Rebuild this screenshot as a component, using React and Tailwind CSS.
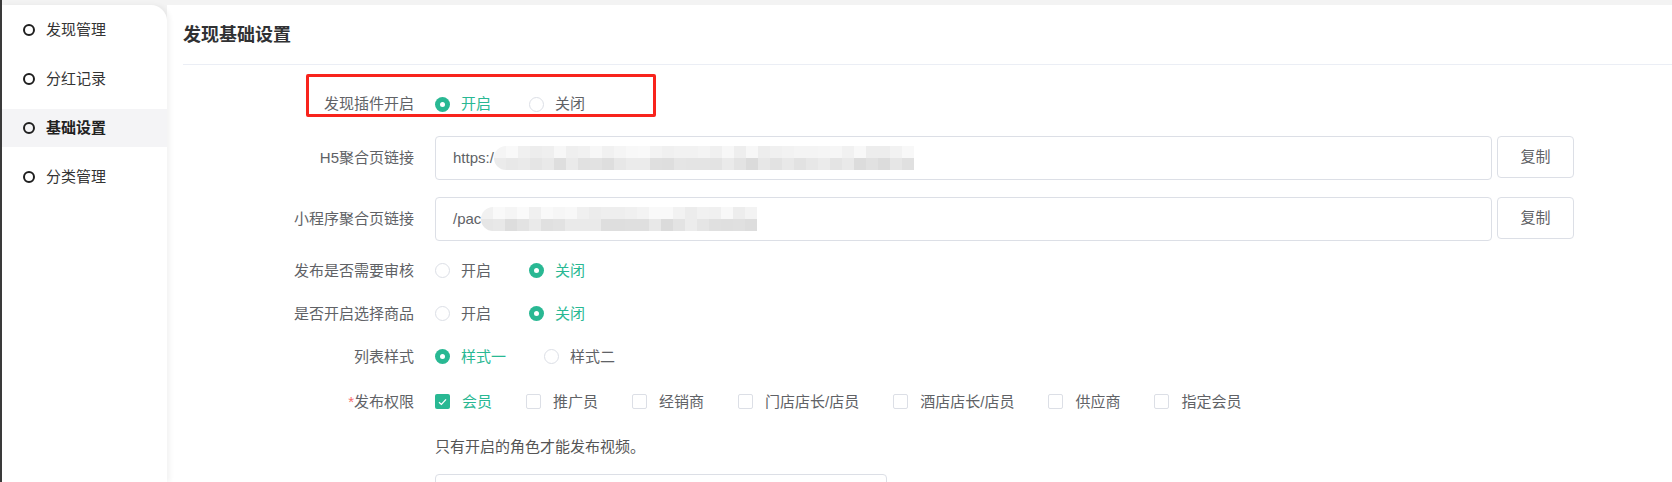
import React from "react";

function shades(n, seed, base, range) {
  const out = [];
  let s = seed;
  for (let i = 0; i < n; i++) {
    s = (s * 9301 + 49297) % 233280;
    const v = Math.round(base + (s / 233280) * range);
    out.push(`rgb(${v},${v},${v})`);
  }
  return out;
}

function Mosaic({ cols, seed }) {
  const top = shades(cols, seed, 236, 14);
  const bottom = shades(cols, seed + 7, 218, 18);
  return (
    <div className="flex flex-col overflow-hidden rounded-l-full blur-[0.4px]">
      <div className="flex">
        {top.map((c, i) => (
          <div key={i} className="h-[12px] w-[12px]" style={{ backgroundColor: c }} />
        ))}
      </div>
      <div className="flex">
        {bottom.map((c, i) => (
          <div key={i} className="h-[12px] w-[12px]" style={{ backgroundColor: c }} />
        ))}
      </div>
    </div>
  );
}

function Radio({ checked, label }) {
  return (
    <div className="mr-[38px] flex items-center">
      {checked ? (
        <span className="flex h-[15px] w-[15px] items-center justify-center rounded-full bg-[#29b893]">
          <span className="h-[5px] w-[5px] rounded-full bg-white" />
        </span>
      ) : (
        <span className="h-[15px] w-[15px] rounded-full border border-[#dcdfe6] bg-white" />
      )}
      <span
        className={
          checked
            ? "ml-[11px] text-[15px] leading-[20px] text-[#29b893]"
            : "ml-[11px] text-[15px] leading-[20px] text-[#606266]"
        }
      >
        {label}
      </span>
    </div>
  );
}

function Checkbox({ checked, label }) {
  return (
    <div className="mr-[34px] flex items-center">
      {checked ? (
        <span className="flex h-[15px] w-[15px] items-center justify-center rounded-[2px] bg-[#29b893]">
          <svg width="9" height="8" viewBox="0 0 9 8" fill="none">
            <path d="M1 4.2 L3.4 6.4 L8 1.4" stroke="white" strokeWidth="1.3" />
          </svg>
        </span>
      ) : (
        <span className="h-[15px] w-[15px] rounded-[2px] border border-[#dcdfe6] bg-white" />
      )}
      <span
        className={
          checked
            ? "ml-[12px] text-[15px] leading-[20px] text-[#29b893]"
            : "ml-[12px] text-[15px] leading-[20px] text-[#606266]"
        }
      >
        {label}
      </span>
    </div>
  );
}

function Label({ children }) {
  return (
    <div className="w-[247px] shrink-0 text-right text-[15px] leading-[20px] text-[#606266]">
      {children}
    </div>
  );
}

const navItems = [
  { name: "发现管理", active: false },
  { name: "分红记录", active: false },
  { name: "基础设置", active: true },
  { name: "分类管理", active: false },
];

export default function App() {
  return (
    <div className="relative flex h-[482px] w-[1672px] overflow-hidden border-l-2 border-[#3a3a3a] bg-[#f3f3f3] pt-[5px] font-['Liberation_Sans','Noto_Sans_CJK_SC',sans-serif]">
      <aside className="relative z-10 flex w-[165px] shrink-0 flex-col gap-[11px] rounded-tr-[16px] bg-white pt-[6px] shadow-[3px_0_5px_rgba(0,0,0,0.05)]">
        {navItems.map((item) => (
          <div
            key={item.name}
            className={
              item.active
                ? "flex h-[38px] shrink-0 items-center bg-[#f4f4f6] pl-[21px]"
                : "flex h-[38px] shrink-0 items-center pl-[21px]"
            }
          >
            <span className="h-[12px] w-[12px] rounded-full border-2 border-[#1f1f1f]" />
            <span
              className={
                item.active
                  ? "ml-[11px] text-[15px] font-semibold leading-[20px] text-[#222]"
                  : "ml-[11px] text-[15px] leading-[20px] text-[#333]"
              }
            >
              {item.name}
            </span>
          </div>
        ))}
      </aside>

      <main className="flex min-w-0 flex-1 flex-col bg-white">
        <div className="ml-4 flex h-[60px] shrink-0 items-center border-b border-[#ebeef5]">
          <h1 className="text-[18px] font-bold leading-[24px] text-[#303133]">发现基础设置</h1>
        </div>

        <div className="mt-[19px] flex h-[40px] shrink-0 items-center">
          <Label>发现插件开启</Label>
          <div className="ml-[21px] flex items-center">
            <Radio checked label="开启" />
            <Radio label="关闭" />
          </div>
        </div>

        <div className="mt-[12px] flex h-[44px] shrink-0 items-center">
          <Label>H5聚合页链接</Label>
          <div className="ml-[21px] flex items-start">
            <div className="flex h-[44px] w-[1057px] items-center rounded-[4px] border border-[#dcdfe6] pl-[17px] text-[15px] text-[#606266]">
              <span className="leading-[20px]">https:/</span>
              <Mosaic cols={35} seed={11} />
            </div>
            <button className="ml-[5px] h-[42px] w-[77px] rounded-[4px] border border-[#dcdfe6] bg-white text-[15px] text-[#606266]">
              复制
            </button>
          </div>
        </div>

        <div className="mt-[17px] flex h-[44px] shrink-0 items-center">
          <Label>小程序聚合页链接</Label>
          <div className="ml-[21px] flex items-start">
            <div className="flex h-[44px] w-[1057px] items-center rounded-[4px] border border-[#dcdfe6] pl-[17px] text-[15px] text-[#606266]">
              <span className="leading-[20px]">/pac</span>
              <Mosaic cols={23} seed={29} />
            </div>
            <button className="ml-[5px] h-[42px] w-[77px] rounded-[4px] border border-[#dcdfe6] bg-white text-[15px] text-[#606266]">
              复制
            </button>
          </div>
        </div>

        <div className="mt-[8px] flex h-[43px] shrink-0 items-center">
          <Label>发布是否需要审核</Label>
          <div className="ml-[21px] flex items-center">
            <Radio label="开启" />
            <Radio checked label="关闭" />
          </div>
        </div>

        <div className="flex h-[43px] shrink-0 items-center">
          <Label>是否开启选择商品</Label>
          <div className="ml-[21px] flex items-center">
            <Radio label="开启" />
            <Radio checked label="关闭" />
          </div>
        </div>

        <div className="flex h-[43px] shrink-0 items-center">
          <Label>列表样式</Label>
          <div className="ml-[21px] flex items-center">
            <Radio checked label="样式一" />
            <Radio label="样式二" />
          </div>
        </div>

        <div className="mt-[2px] flex h-[43px] shrink-0 items-center">
          <Label>
            <span className="text-[#f56c6c]">*</span>发布权限
          </Label>
          <div className="ml-[21px] flex items-center">
            <Checkbox checked label="会员" />
            <Checkbox label="推广员" />
            <Checkbox label="经销商" />
            <Checkbox label="门店店长/店员" />
            <Checkbox label="酒店店长/店员" />
            <Checkbox label="供应商" />
            <Checkbox label="指定会员" />
          </div>
        </div>

        <p className="ml-[268px] mt-[14px] shrink-0 text-[15px] leading-[20px] text-[#555]">
          只有开启的角色才能发布视频。
        </p>

        <div className="ml-[268px] mt-[17px] h-[40px] w-[452px] shrink-0 rounded-[4px] border border-[#dcdfe6]" />
      </main>

      <div className="pointer-events-none absolute left-[304px] top-[74px] h-[43px] w-[350px] rounded-[2px] border-[3px] border-[#f8231c]" />
    </div>
  );
}
